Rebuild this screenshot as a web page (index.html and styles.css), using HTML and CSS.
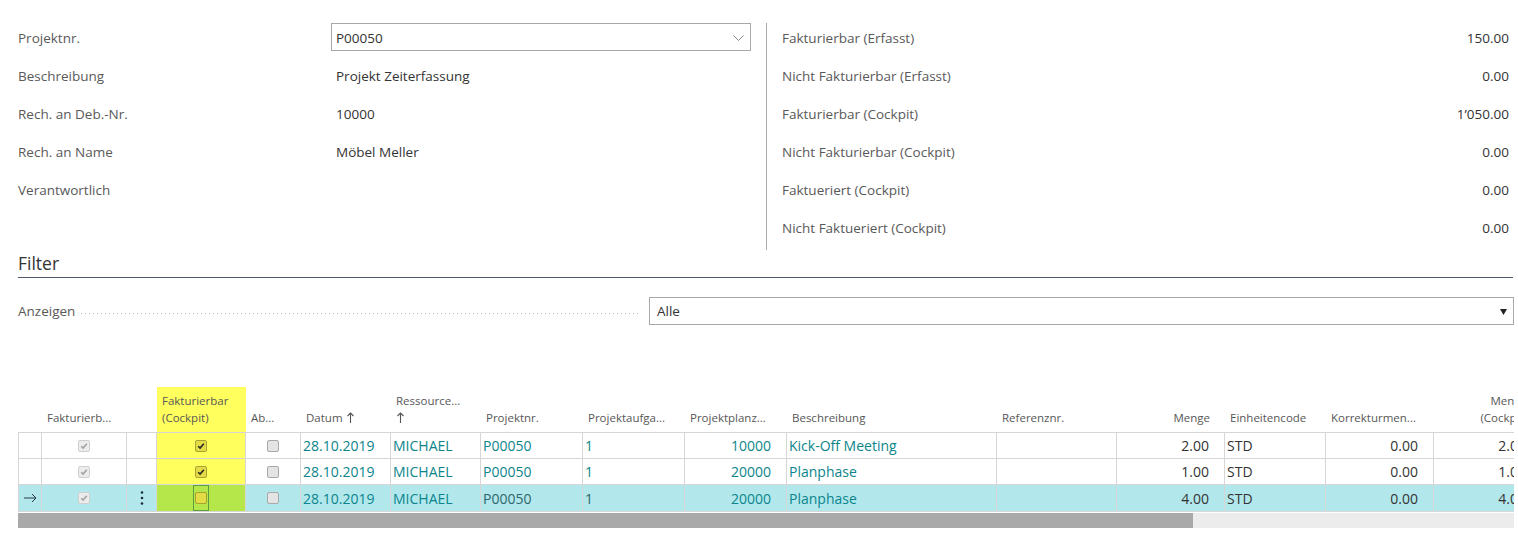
FILE: index.html
```html
<!DOCTYPE html>
<html lang="de">
<head>
    <meta charset="UTF-8">
    <title>Projekt Cockpit</title>
    <link rel="stylesheet" href="styles.css">
</head>
<body>
<div class="page">

    <!-- Kopfdaten -->
    <section class="top">
        <div class="fields-left">
            <div class="field-row">
                <span class="field-label">Projektnr.</span>
                <div class="input">
                    <span>P00050</span>
                    <svg class="chevron" width="11" height="6" viewBox="0 0 11 6"><polyline points="0.5,0.5 5.5,5.5 10.5,0.5" fill="none" stroke="#8a8a8a" stroke-width="1"/></svg>
                </div>
            </div>
            <div class="field-row">
                <span class="field-label">Beschreibung</span>
                <span class="field-value">Projekt Zeiterfassung</span>
            </div>
            <div class="field-row">
                <span class="field-label">Rech. an Deb.-Nr.</span>
                <span class="field-value">10000</span>
            </div>
            <div class="field-row">
                <span class="field-label">Rech. an Name</span>
                <span class="field-value">Möbel Meller</span>
            </div>
            <div class="field-row">
                <span class="field-label">Verantwortlich</span>
                <span class="field-value"></span>
            </div>
        </div>
        <div class="divider"></div>
        <div class="fields-right">
            <div class="stat-row"><span class="field-label">Fakturierbar (Erfasst)</span><span class="field-value">150.00</span></div>
            <div class="stat-row"><span class="field-label">Nicht Fakturierbar (Erfasst)</span><span class="field-value">0.00</span></div>
            <div class="stat-row"><span class="field-label">Fakturierbar (Cockpit)</span><span class="field-value">1’050.00</span></div>
            <div class="stat-row"><span class="field-label">Nicht Fakturierbar (Cockpit)</span><span class="field-value">0.00</span></div>
            <div class="stat-row"><span class="field-label">Faktueriert (Cockpit)</span><span class="field-value">0.00</span></div>
            <div class="stat-row"><span class="field-label">Nicht Faktueriert (Cockpit)</span><span class="field-value">0.00</span></div>
        </div>
    </section>

    <!-- Filter -->
    <section class="filter">
        <h2 class="group-title">Filter</h2>
        <div class="filter-row">
            <span class="filter-label">Anzeigen</span>
            <span class="leader"></span>
            <div class="select">
                <span>Alle</span>
                <svg width="7" height="7" viewBox="0 0 7 7"><polygon points="0,1 7,1 3.5,7" fill="#222"/></svg>
            </div>
        </div>
    </section>

    <!-- Zeilen -->
    <section class="lines">
        <div class="grid-wrap">
            <table class="grid">
                <colgroup>
                    <col style="width:24px"><col style="width:85px"><col style="width:30px"><col style="width:89px">
                    <col style="width:55px"><col style="width:90px"><col style="width:90px"><col style="width:102px">
                    <col style="width:102px"><col style="width:102px"><col style="width:210px"><col style="width:120px">
                    <col style="width:108px"><col style="width:101px"><col style="width:108px"><col style="width:108px">
                </colgroup>
                <thead>
                    <tr>
                        <th></th>
                        <th>Fakturierb...</th>
                        <th></th>
                        <th class="hl">Fakturierbar<br>(Cockpit)</th>
                        <th>Ab...</th>
                        <th>Datum <svg class="sort" width="7" height="11" viewBox="0 0 7 11"><path d="M3.5 11 V1 M0.5 4 L3.5 1 L6.5 4"/></svg></th>
                        <th>Ressource...<br><svg class="sort" width="7" height="11" viewBox="0 0 7 11"><path d="M3.5 11 V1 M0.5 4 L3.5 1 L6.5 4"/></svg></th>
                        <th>Projektnr.</th>
                        <th>Projektaufga...</th>
                        <th>Projektplanz...</th>
                        <th>Beschreibung</th>
                        <th>Referenznr.</th>
                        <th class="num">Menge</th>
                        <th>Einheitencode</th>
                        <th>Korrekturmen...</th>
                        <th class="num">Menge<br>(Cockpit)</th>
                    </tr>
                </thead>
                <tbody>
                    <tr>
                        <td></td>
                        <td class="center"><span class="cb cb-off-checked"><svg viewBox="0 0 12 12"><path d="M2.6 6.3 L4.9 8.5 L9.4 3.3"/></svg></span></td>
                        <td></td>
                        <td class="center hl"><span class="cb cb-yellow"><svg viewBox="0 0 12 12"><path d="M2.6 6.3 L4.9 8.5 L9.4 3.3"/></svg></span></td>
                        <td class="center"><span class="cb"></span></td>
                        <td class="link">28.10.2019</td>
                        <td class="link">MICHAEL</td>
                        <td class="link">P00050</td>
                        <td class="link">1</td>
                        <td class="link num">10000</td>
                        <td class="link">Kick-Off Meeting</td>
                        <td></td>
                        <td class="num">2.00</td>
                        <td>STD</td>
                        <td class="num">0.00</td>
                        <td class="num">2.00</td>
                    </tr>
                    <tr>
                        <td></td>
                        <td class="center"><span class="cb cb-off-checked"><svg viewBox="0 0 12 12"><path d="M2.6 6.3 L4.9 8.5 L9.4 3.3"/></svg></span></td>
                        <td></td>
                        <td class="center hl"><span class="cb cb-yellow"><svg viewBox="0 0 12 12"><path d="M2.6 6.3 L4.9 8.5 L9.4 3.3"/></svg></span></td>
                        <td class="center"><span class="cb"></span></td>
                        <td class="link">28.10.2019</td>
                        <td class="link">MICHAEL</td>
                        <td class="link">P00050</td>
                        <td class="link">1</td>
                        <td class="link num">20000</td>
                        <td class="link">Planphase</td>
                        <td></td>
                        <td class="num">1.00</td>
                        <td>STD</td>
                        <td class="num">0.00</td>
                        <td class="num">1.00</td>
                    </tr>
                    <tr class="selected">
                        <td class="center">
                            <svg width="13" height="10" viewBox="0 0 13 10"><path d="M0 5 H12 M8 1 L12 5 L8 9" fill="none" stroke="#2b3a46" stroke-width="1"/></svg>
                        </td>
                        <td class="center"><span class="cb cb-off-checked"><svg viewBox="0 0 12 12"><path d="M2.6 6.3 L4.9 8.5 L9.4 3.3"/></svg></span></td>
                        <td class="center">
                            <svg width="4" height="16" viewBox="0 0 4 16"><circle cx="2" cy="2.5" r="1.3" fill="#1f2d3d"/><circle cx="2" cy="8" r="1.3" fill="#1f2d3d"/><circle cx="2" cy="13.5" r="1.3" fill="#1f2d3d"/></svg>
                        </td>
                        <td class="center hl"><span class="focus"><span class="cb cb-yellow"></span></span></td>
                        <td class="center"><span class="cb"></span></td>
                        <td class="link">28.10.2019</td>
                        <td class="link">MICHAEL</td>
                        <td class="link dim">P00050</td>
                        <td class="link dim">1</td>
                        <td class="link num">20000</td>
                        <td class="link">Planphase</td>
                        <td></td>
                        <td class="num">4.00</td>
                        <td>STD</td>
                        <td class="num">0.00</td>
                        <td class="num">4.00</td>
                    </tr>
                </tbody>
            </table>
        </div>
        <div class="hscroll"><div class="hscroll-thumb"></div></div>
    </section>

</div>
</body>
</html>
```

FILE: styles.css
```css
body {
    margin: 0;
    font-family: "Open Sans", "Noto Sans", sans-serif;
    background-color: #fff;
    color: #333;
}
.page {
    padding: 18px 4px 0 18px;
}

/* Kopfdaten */
.top {
    display: flex;
}
.fields-left {
    width: 733px;
}
.field-row {
    display: grid;
    grid-template-columns: 313px 1fr;
    align-items: center;
    height: 38px;
}
.field-label {
    font-size: 13.5px;
    color: #595959;
    padding-top: 2px;
}
.field-value {
    font-size: 13.5px;
    color: #333;
    padding-left: 5px;
    padding-top: 2px;
}
.input {
    height: 28px;
    box-sizing: border-box;
    border: 1px solid #a8a8a8;
    display: flex;
    align-items: center;
    justify-content: space-between;
    padding: 1px 6px 0 4px;
    font-size: 13.5px;
    color: #333;
}
.divider {
    width: 1px;
    background-color: #a8a8a8;
    margin: 5px 0 0 15px;
}
.fields-right {
    flex: 1;
    padding: 0 5px 4px 15px;
}
.stat-row {
    display: flex;
    justify-content: space-between;
    align-items: center;
    height: 38px;
}

/* Filter */
.group-title {
    margin: 1px 1px 0 0;
    font-size: 17.5px;
    font-weight: normal;
    line-height: 24px;
    padding-bottom: 2px;
    color: #333;
    border-bottom: 1px solid #4e5866;
}
.filter-row {
    display: flex;
    align-items: center;
    height: 28px;
    margin-top: 19px;
}
.filter-label {
    font-size: 13.5px;
    color: #595959;
}
.leader {
    flex: 1;
    height: 1px;
    margin: 4px 9px 0 6px;
    background-image: repeating-linear-gradient(to right, #bdbdbd 0, #bdbdbd 1px, transparent 1px, transparent 4px);
}
.select {
    width: 865px;
    height: 28px;
    box-sizing: border-box;
    border: 1px solid #a8a8a8;
    display: flex;
    align-items: center;
    justify-content: space-between;
    padding: 0 6px 0 7px;
    font-size: 13.5px;
}

/* Zeilen */
.lines {
    margin-top: 62px;
}
.grid-wrap {
    width: 1496px;
    overflow: hidden;
}
.grid {
    table-layout: fixed;
    width: 1524px;
    border-collapse: separate;
    border-spacing: 0;
}
.grid th {
    height: 46px;
    box-sizing: border-box;
    vertical-align: bottom;
    text-align: left;
    font-weight: normal;
    font-size: 11.5px;
    line-height: 17px;
    color: #575757;
    padding: 0 6px 6px 5px;
    border-bottom: 1px solid #d6d6d6;
    white-space: nowrap;
    overflow: hidden;
}
.grid th .sort {
    vertical-align: -1px;
    margin-left: 1px;
}
.sort path {
    fill: none;
    stroke: #555;
    stroke-width: 1.1;
}
.grid td {
    height: 26px;
    box-sizing: border-box;
    font-size: 14px;
    color: #333;
    padding: 0 3px 0 2px;
    border-right: 1px solid #d6d6d6;
    border-bottom: 1px solid #d6d6d6;
    white-space: nowrap;
    overflow: hidden;
    vertical-align: middle;
}
.grid td:first-child {
    border-left: 1px solid #d6d6d6;
}
.grid th.num,
.grid td.num {
    text-align: right;
    padding-right: 15px;
}
.grid td.center {
    text-align: center;
    padding: 0;
    line-height: 0;
}
.grid td.link {
    color: #0b858b;
}
.grid .hl {
    background-color: #ffff5d;
}
.grid tr.selected td {
    background-color: #b2e8ec;
}
.grid tr.selected td.hl {
    background-color: #b5e74a;
}
.grid tr.selected td.dim {
    color: #2e6669;
}

/* Checkboxen */
.cb {
    display: inline-block;
    width: 12px;
    height: 12px;
    box-sizing: border-box;
    border: 1px solid #a9a9a9;
    border-radius: 2px;
    background-color: #e4e4e4;
    vertical-align: middle;
}
.cb svg {
    display: block;
    width: 10px;
    height: 10px;
}
.cb path {
    fill: none;
    stroke-width: 2;
}
.cb-off-checked {
    border-color: #cfcfcf;
    background-color: #ececec;
}
.cb-off-checked path {
    stroke: #a3a3a3;
}
.cb-yellow {
    border-color: #a9a232;
    background-color: #e3dc45;
}
.cb-yellow path {
    stroke: #2c2c2c;
}
.focus {
    display: inline-block;
    padding: 6px 1px;
    border: 1px solid #5c9e3e;
    line-height: 0;
}

/* Scrollleiste */
.hscroll {
    width: 1496px;
    height: 15px;
    margin-top: 1px;
    background-color: #ececec;
}
.hscroll-thumb {
    width: 1175px;
    height: 15px;
    background-color: #a9a9a9;
}
```
